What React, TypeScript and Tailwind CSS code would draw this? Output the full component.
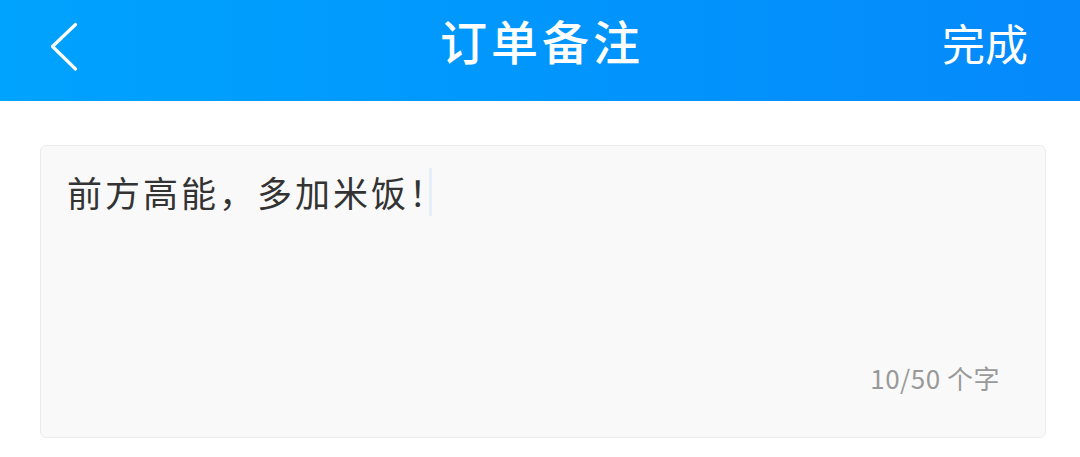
import React from 'react';

const FONT = { fontFamily: '"Noto Sans CJK SC", "Noto Sans", sans-serif' };

// Back chevron
const BackIcon: React.FC = () => (
  <svg width="34" height="52" viewBox="0 0 34 52" fill="none">
    <path
      d="M28.5 2.5 L5.5 24.5 L28.5 47"
      stroke="white"
      strokeWidth="3.2"
      strokeLinecap="round"
      strokeLinejoin="round"
    />
  </svg>
);

export default function App() {
  const note = '前方高能，多加米饭！';

  return (
    <div className="w-[1080px] h-[457px] bg-white overflow-hidden" style={FONT}>
      {/* Header */}
      <div className="h-[101px] bg-gradient-to-r from-[#00a3fe] to-[#0689fb] flex items-center justify-between px-[47px]">
        <div className="w-[100px] flex items-center -mt-[6px]">
          <BackIcon />
        </div>
        <h1 className="text-[47px] font-medium text-white tracking-[4px] leading-none -mt-[22px] ml-[4px]">
          订单备注
        </h1>
        <div className="w-[100px] flex justify-end -mt-[17px] pr-[5px]">
          <span className="text-[43px] text-white leading-none whitespace-nowrap">完成</span>
        </div>
      </div>

      {/* Note box */}
      <div className="px-[40px] pt-[44px]">
        <div className="h-[293px] w-[1006px] bg-[#f9f9f9] border border-[#ececec] rounded-[6px] flex flex-col justify-between pl-[26px] pr-[26px] pt-[22px] pb-[46px]">
          <div className="flex items-center">
            <span className="text-[35px] text-[#333] leading-[46px] tracking-[3px]">{note}</span>
            <span className="w-[3px] h-[48px] bg-[#e6eefa] -ml-[18px]" />
          </div>
          <div className="flex justify-end pr-[19px]">
            <span className="text-[26px] text-[#999] leading-none tracking-[0.5px]">
              {note.length}/50 个字
            </span>
          </div>
        </div>
      </div>
    </div>
  );
}
